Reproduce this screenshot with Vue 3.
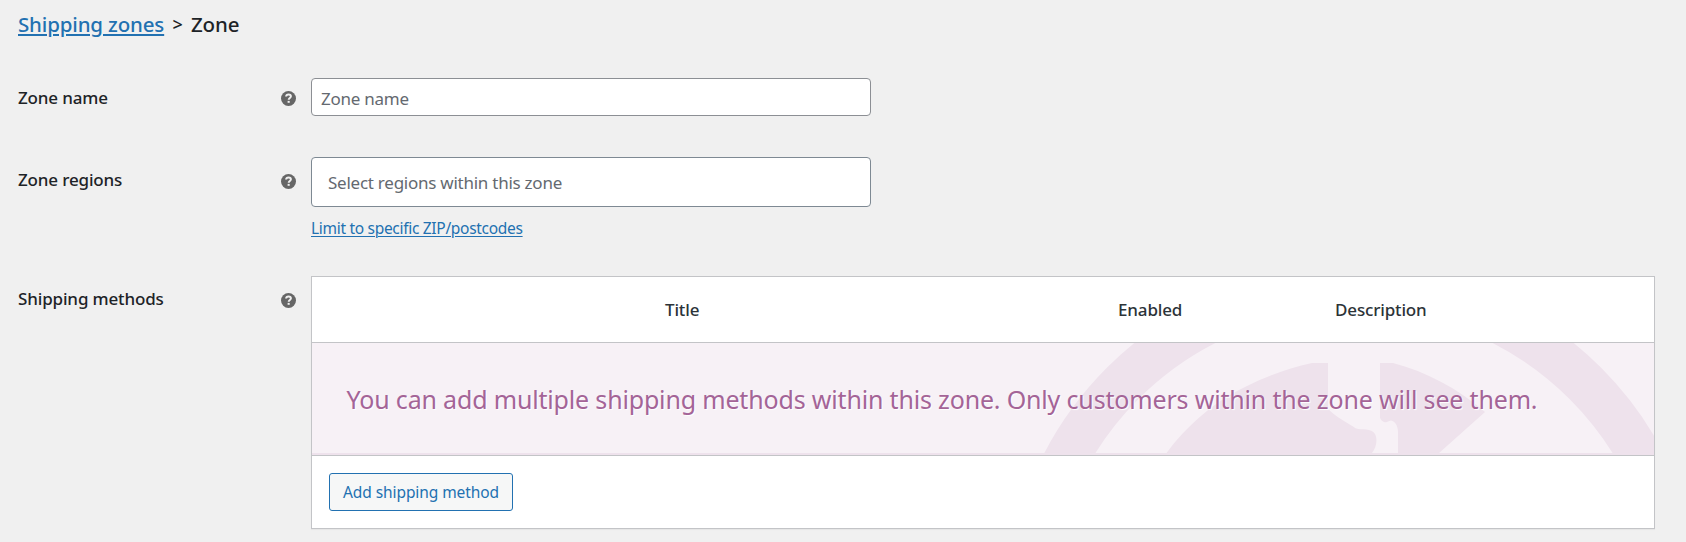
<script setup>
const columns = [
  { key: 'sort', label: '' },
  { key: 'title', label: 'Title' },
  { key: 'enabled', label: 'Enabled' },
  { key: 'description', label: 'Description' },
]
</script>

<template>
  <main class="page">
    <h2 class="heading">
      <a class="link crumb">Shipping zones</a><span class="sep">&gt;</span><span class="current">Zone</span>
    </h2>

    <section class="row name">
      <label class="label l-name">Zone name</label>
      <svg class="help" viewBox="0 0 15 15"><circle cx="7.5" cy="7.5" r="7.5" /><path d="M5.1 5.5C5.2 4 6.2 3.4 7.6 3.4C9 3.4 9.9 4.1 9.9 5.3C9.9 7 7.7 6.9 7.7 8.7" /><rect x="6.6" y="9.9" width="2.1" height="1.9" /></svg>
      <input class="input" type="text" placeholder="Zone name" />
    </section>

    <section class="row regions">
      <label class="label l-regions">Zone regions</label>
      <svg class="help" viewBox="0 0 15 15"><circle cx="7.5" cy="7.5" r="7.5" /><path d="M5.1 5.5C5.2 4 6.2 3.4 7.6 3.4C9 3.4 9.9 4.1 9.9 5.3C9.9 7 7.7 6.9 7.7 8.7" /><rect x="6.6" y="9.9" width="2.1" height="1.9" /></svg>
      <div>
        <div class="select"><span>Select regions within this zone</span></div>
        <a class="link limit">Limit to specific ZIP/postcodes</a>
      </div>
    </section>

    <section class="row methods">
      <label class="label l-methods">Shipping methods</label>
      <svg class="help" viewBox="0 0 15 15"><circle cx="7.5" cy="7.5" r="7.5" /><path d="M5.1 5.5C5.2 4 6.2 3.4 7.6 3.4C9 3.4 9.9 4.1 9.9 5.3C9.9 7 7.7 6.9 7.7 8.7" /><rect x="6.6" y="9.9" width="2.1" height="1.9" /></svg>
      <div class="table">
        <div class="thead">
          <div v-for="c in columns" :key="c.key" :class="['th', c.key]"><span>{{ c.label }}</span></div>
        </div>
        <div class="blank">
          <svg class="art" viewBox="1000 343 654 110" width="654" height="110">
            <circle cx="1354" cy="614.5" r="327" />
            <path d="M1166.5 453C1186 427 1213 402 1245 387C1267 376 1289 368 1312 363H1328V409C1336 417 1346 422 1356 428.5C1362 430 1371 428 1375 434C1378 440 1376 448 1372 453Z" />
            <path d="M1380 363H1393C1427 372 1457 388 1485 412L1439 453H1398V432C1398 426 1395 421 1391 420.5C1388 421 1387 423 1384 422C1382 421 1381 420 1380 418Z" />
          </svg>
          <p class="message">You can add multiple shipping methods within this zone. Only customers within the zone will see them.</p>
        </div>
        <div class="tfoot">
          <button class="button"><span>Add shipping method</span></button>
        </div>
      </div>
    </section>
  </main>
</template>

<style>
body {
  background: #f0f0f0;
}
</style>

<style scoped>
.page {
  box-sizing: border-box;
  width: 1686px;
  height: 542px;
  padding: 10px 30px 0 18px;
  overflow: hidden;
  background: #f0f0f0;
  color: #1d2327;
  font-family: "Segoe UI", "Noto Sans", "Open Sans", sans-serif;
}
.link {
  color: #2271b1;
  text-decoration: underline;
}
.heading {
  display: flex;
  margin: 0;
  height: 68px;
  font-size: 20.5px;
  font-weight: 500;
  letter-spacing: -0.16px;
  line-height: 28px;
}
.crumb {
  width: 146px;
  white-space: nowrap;
  text-decoration-thickness: 2px;
  text-underline-offset: 2px;
}
.sep {
  width: 27px;
  text-align: center;
  font-size: 18px;
}
.row {
  display: grid;
  grid-template-columns: 263px 30px 1fr;
  align-items: start;
}
.name {
  height: 79px;
}
.regions {
  height: 119px;
}
.label {
  padding-top: 11px;
  font-size: 17px;
  font-weight: 500;
  letter-spacing: -0.15px;
  line-height: 23px;
}
.name .label {
  padding-top: 8px;
}
.help {
  width: 15px;
  height: 15px;
  margin-top: 17px;
}
.name .help {
  margin-top: 13px;
}
.help circle {
  fill: #666;
}
.help path {
  fill: none;
  stroke: #f0f0f0;
  stroke-width: 2;
}
.help rect {
  fill: #f0f0f0;
}
.input,
.select {
  box-sizing: border-box;
  width: 560px;
  border: 1px solid #8c8f94;
  border-radius: 4px;
  background: #fff;
  color: #646970;
  font-family: inherit;
  font-size: 17px;
  letter-spacing: -0.25px;
}
.input {
  height: 38px;
  padding: 2px 9px 0;
  outline: none;
}
.input::placeholder {
  color: #646970;
  opacity: 1;
}
.select {
  height: 50px;
  padding: 0 16px;
  border-color: #7e8993;
  line-height: 49px;
}
.limit {
  display: inline-block;
  margin-top: 11px;
  font-size: 15.5px;
  letter-spacing: -0.3px;
  line-height: 21px;
  white-space: nowrap;
  text-decoration-thickness: 1px;
  text-underline-offset: 2px;
}
.table {
  box-sizing: border-box;
  width: 1344px;
  height: 253px;
  border: 1px solid #c3c4c7;
  background: #fff;
  box-shadow: 0 1px 1px rgba(0, 0, 0, 0.04);
}
.thead {
  display: grid;
  grid-template-columns: 353px 453px 217px 1fr;
  height: 65px;
  border-bottom: 1px solid #c3c4c7;
  color: #2c3338;
  font-size: 17px;
  font-weight: 500;
  letter-spacing: -0.15px;
  line-height: 66px;
}
.blank {
  position: relative;
  box-sizing: border-box;
  height: 113px;
  border-bottom: 1px solid #c3c4c7;
  background: #f7f1f6;
  box-shadow: inset 0 -2px 0 #eee2ec;
}
.art {
  position: absolute;
  top: 0;
  right: 0;
}
.art circle {
  fill: none;
  stroke: #eee2ec;
  stroke-width: 44.4;
}
.art path {
  fill: #eee2ec;
}
.message {
  position: relative;
  margin: 0;
  padding-left: 34.5px;
  color: #a46497;
  font-size: 25px;
  letter-spacing: -0.17px;
  line-height: 112px;
  white-space: nowrap;
  text-shadow: 1px 1px 1px #fff;
}
.tfoot {
  padding: 17px;
}
.button {
  width: 184px;
  height: 38px;
  padding: 0 13px;
  border: 1px solid #2271b1;
  border-radius: 3px;
  background: #f6f7f7;
  color: #2271b1;
  font-family: inherit;
  font-size: 15.5px;
  letter-spacing: -0.08px;
  text-align: left;
  white-space: nowrap;
}
</style>
